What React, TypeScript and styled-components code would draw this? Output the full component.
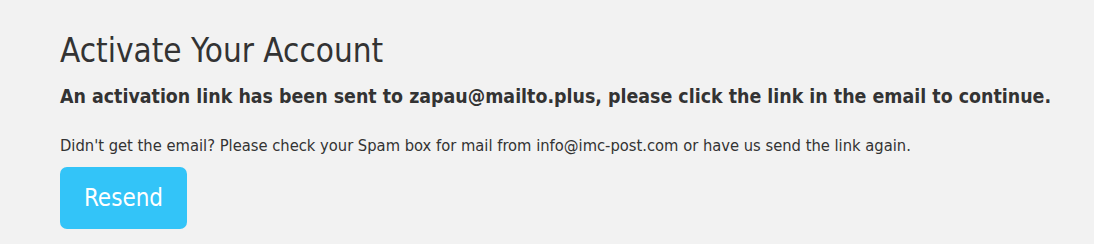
import React from "react";
import styled, { createGlobalStyle } from "styled-components";

const Global = createGlobalStyle`
  html, body { margin: 0; padding: 0; background: #f2f2f2; }
  body { font-family: "DejaVu Sans Condensed", "DejaVu Sans", sans-serif; color: #333; }
`;

const Page = styled.main`
  padding: 31px 60px 0 60px;
  display: flex;
  flex-direction: column;
  align-items: flex-start;
`;

const Title = styled.h1`
  margin: 0;
  font-size: 33px;
  font-weight: 400;
  line-height: 40px;
  color: #333;
  white-space: nowrap;
`;

const Lead = styled.p`
  margin: 13px 0 0;
  font-size: 19.4px;
  font-weight: 700;
  line-height: 26px;
  color: #333;
  white-space: nowrap;
`;

const Note = styled.p`
  margin: 26px 0 0;
  font-size: 16.4px;
  line-height: 20px;
  color: #333;
  white-space: nowrap;
`;

const Button = styled.button`
  margin-top: 11px;
  width: 127px;
  height: 62px;
  padding: 0;
  border: none;
  border-radius: 7px;
  background: #33c4f8;
  color: #fff;
  font-family: inherit;
  font-size: 24px;
  cursor: pointer;
`;

export default function App() {
  return (
    <>
      <Global />
      <Page>
        <Title>Activate Your Account</Title>
        <Lead>
          An activation link has been sent to zapau@mailto.plus, please click the link in the email to continue.
        </Lead>
        <Note>
          Didn't get the email? Please check your Spam box for mail from info@imc-post.com or have us send the link again.
        </Note>
        <Button type="button">Resend</Button>
      </Page>
    </>
  );
}
